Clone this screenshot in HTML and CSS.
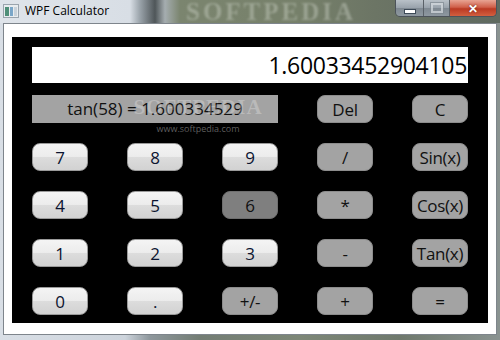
FILE: index.html
```html
<!DOCTYPE html>
<html lang="en">
<head>
    <meta charset="UTF-8">
    <title>WPF Calculator</title>
    <link rel="stylesheet" href="styles.css">
</head>
<body>
    <div class="window">
        <div class="titlebar">
            <svg class="app-icon" width="16" height="14" viewBox="0 0 16 14">
                <rect x="0.5" y="0.5" width="15" height="13" fill="#e8ecef" stroke="#9aa4ad"/>
                <rect x="2" y="3" width="4" height="9" fill="#4f8f78"/>
                <rect x="7" y="3" width="3" height="9" fill="#7aa6c8"/>
                <rect x="11" y="3" width="3" height="9" fill="#c9d2da"/>
            </svg>
            <span class="title">WPF Calculator</span>
            <div class="watermark-bar">SOFTPEDIA</div>
            <div class="controls">
                <div class="ctl min"><span></span></div>
                <div class="ctl max"><span></span></div>
                <div class="ctl close">&#10005;</div>
            </div>
        </div>
        <div class="client">
            <div class="panel">
                <div class="display">1.60033452904105</div>
                <div class="history">tan(58) = 1.600334529</div>
                <button class="op">Del</button>
                <button class="op">C</button>

                <button class="num">7</button>
                <button class="num">8</button>
                <button class="num">9</button>
                <button class="op">/</button>
                <button class="op">Sin(x)</button>

                <button class="num">4</button>
                <button class="num">5</button>
                <button class="op dark">6</button>
                <button class="op">*</button>
                <button class="op">Cos(x)</button>

                <button class="num">1</button>
                <button class="num">2</button>
                <button class="num">3</button>
                <button class="op">-</button>
                <button class="op">Tan(x)</button>

                <button class="num">0</button>
                <button class="num">.</button>
                <button class="op">+/-</button>
                <button class="op">+</button>
                <button class="op">=</button>

                <div class="stamp">
                    <div class="stamp-big">SOFTPEDIA</div>
                    <div class="stamp-url">www.softpedia.com</div>
                </div>
            </div>
        </div>
    </div>
</body>
</html>
```

FILE: styles.css
```css
body {
    margin: 0;
    font-family: "Open Sans", "Noto Sans", sans-serif;
}

.window {
    width: 500px;
    height: 340px;
    overflow: hidden;
    background: linear-gradient(90deg, #d9dfe6 0%, #cdd4dc 25%, #8e979c 30%, #737d74 40%, #7d8777 60%, #6f796d 80%, #8a9391 100%);
}

.titlebar {
    height: 23px;
    display: flex;
    align-items: center;
    position: relative;
    overflow: hidden;
    background: linear-gradient(90deg, #dfe4ea 0%, #d8dee5 26%, #9aa3aa 28%, #4f5659 31%, #a5adb0 33%, #7b856f 36%, #76806a 60%, #6c7565 75%, #5f6a60 100%);
}

.app-icon {
    margin-left: 3px;
    margin-top: -1px;
}

.title {
    margin-left: 6px;
    font-size: 12px;
    color: #000;
    margin-top: -2px;
}

.watermark-bar {
    position: absolute;
    left: 186px;
    top: 1px;
    font-family: "Liberation Serif", serif;
    font-weight: bold;
    font-size: 25px;
    line-height: 21px;
    letter-spacing: 3px;
    color: rgba(215, 222, 210, 0.38);
    filter: blur(1.2px);
}

.controls {
    position: absolute;
    right: 3px;
    top: 0;
    display: flex;
    height: 16px;
    border: 1px solid #4c535a;
    border-top: none;
    border-radius: 0 0 5px 5px;
    overflow: hidden;
}

.ctl {
    height: 16px;
    display: flex;
    align-items: center;
    justify-content: center;
    background: linear-gradient(#b9c1c8 0%, #98a2ab 50%, #7f8992 51%, #8e98a0 100%);
    border-right: 1px solid #5a6168;
}

.ctl.min {
    width: 27px;
}

.ctl.min span {
    width: 10px;
    height: 3px;
    background: #fff;
    border: 1px solid #3d4a57;
    margin-top: 6px;
}

.ctl.max {
    width: 25px;
}

.ctl.max span {
    width: 8px;
    height: 6px;
    border: 2px solid #d8dde2;
    outline: 1px solid #7f8992;
    opacity: 0.7;
}

.ctl.close {
    width: 46px;
    border-right: none;
    background: linear-gradient(#e8a493 0%, #d0604a 45%, #bb3a23 55%, #d25f3f 100%);
    color: #fff;
    font-size: 12px;
    font-weight: bold;
    text-shadow: 0 0 2px #5a1a10;
}

.client {
    margin: 0 3px;
    height: 312px;
    background: #fff;
    border: 1px solid #7e858c;
    padding: 13px 8px 0 8px;
    box-sizing: border-box;
}

.panel {
    position: relative;
    background: #000;
    height: 286px;
    box-sizing: border-box;
    padding: 10px 20px 0 20px;
    display: grid;
    grid-template-columns: repeat(5, 56px);
    grid-template-rows: repeat(6, 28px);
    column-gap: 39px;
    row-gap: 20px;
}

.display {
    grid-column: 1 / 6;
    height: 36px;
    background: #fff;
    font-size: 23px;
    text-align: right;
    line-height: 36px;
    padding-right: 1px;
    color: #000;
    letter-spacing: -0.3px;
}

.history {
    grid-column: 1 / 4;
    background: #a3a3a3;
    font-size: 17px;
    line-height: 27px;
    text-align: center;
    color: #111;
}

button {
    font-family: "Open Sans", "Noto Sans", sans-serif;
    font-size: 17px;
    padding: 0;
    height: 28px;
    border-radius: 8px;
    color: #111;
    white-space: nowrap;
    letter-spacing: -0.3px;
}

.num {
    background: linear-gradient(#f4f4f4 0%, #ececec 48%, #dcdcdc 52%, #d2d2d2 100%);
    border: 1px solid #9a9a9a;
    color: #0b1430;
}

.op {
    background: #a3a3a3;
    border: 1px solid #8c8c8c;
}

.op.dark {
    background: #7f7f7f;
    border-color: #6e6e6e;
}

.stamp {
    position: absolute;
    left: 116px;
    top: 59px;
    width: 140px;
    text-align: center;
    pointer-events: none;
}

.stamp-big {
    font-family: "Liberation Serif", serif;
    font-weight: bold;
    font-size: 21px;
    letter-spacing: 1px;
    color: rgba(255, 255, 255, 0.25);
    line-height: 22px;
}

.stamp-url {
    font-size: 9px;
    color: #5e5e5e;
    line-height: 12px;
    margin-top: 5px;
}
```
